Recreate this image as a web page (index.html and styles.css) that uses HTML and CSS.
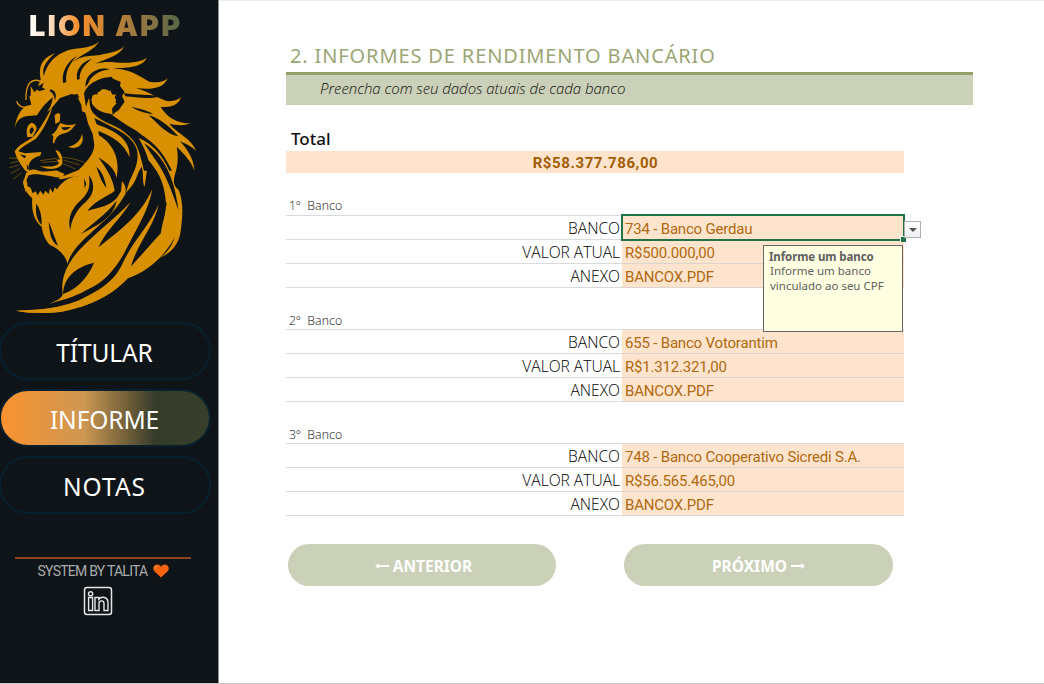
FILE: index.html
```html
<!DOCTYPE html>
<html lang="pt-BR">
<head>
<meta charset="utf-8">
<title>Lion App</title>
<link rel="stylesheet" href="styles.css">
</head>
<body>
<div class="app">
  <aside class="sidebar">
    <h1 class="brand">LION APP</h1>
    <svg class="lion" viewBox="0 114 657 831" aria-hidden="true">
      <!-- mane, neck and right strand -->
      <path class="o" d="M122 238C112 190 135 172 165 160C130 190 126 212 132 228C145 175 190 147 240 145C268 142 288 135 298 124C282 153 243 162 214 190C250 160 275 172 312 162C345 157 362 150 373 138C360 168 318 176 285 192C325 180 342 190 385 188C410 187 430 181 440 174C425 205 375 203 335 205C400 208 420 232 448 245C474 250 492 246 503 234C493 266 450 270 408 264C445 275 470 292 500 303C520 305 534 300 543 292C534 320 505 323 482 320C500 352 530 370 572 370C550 379 522 375 508 371C530 400 575 415 588 452C573 438 555 430 540 424C562 448 582 476 583 512C574 484 552 462 530 440C545 520 500 540 536 570C549 600 550 640 541 700C535 735 510 762 480 773C500 760 515 740 524 712C490 775 440 815 383 835C330 893 250 925 180 936C130 941 80 939 48 932C120 931 180 923 230 904C320 870 350 825 395 793C480 710 500 660 497 600C492 540 470 510 445 480L434 560C426 550 432 520 425 500C405 530 415 540 380 575C340 650 280 690 245 725C220 750 208 770 203 792C196 765 175 745 150 735C135 720 128 700 125 680C98 660 94 620 97 595C80 582 70 560 70 540C110 570 160 550 185 530L236 510C255 490 282 465 283 435L278 402L264 370L256 338L246 334L244 315L230 286L215 282L180 294L150 330L120 345L86 348C67 348 48 360 44 386C48 355 58 332 78 318L94 314L88 290L110 270Z"/>
      <!-- left ear and wisps -->
      <path class="l" d="M122 244C95 233 76 250 78 300M50 304C57 325 78 325 95 316"/>
      <path class="o" d="M92 258L105 280L125 288L112 315L93 306Z"/>
      <!-- cuts through the crown -->
      <path class="d" d="M190 250C182 210 210 180 230 168C205 195 196 220 199 246ZM232 240C225 215 242 185 276 176C247 199 238 217 239 237ZM257 260C253 220 300 197 330 208C294 211 270 232 265 250ZM120 256L132 248L126 262L136 268L118 274L104 264ZM152 268C167 272 171 286 165 301C162 285 157 276 148 273ZM372 280C410 285 450 284 488 289C445 299 410 292 376 289ZM395 320C415 326 440 329 460 343C432 338 405 330 395 320Z"/>
      <!-- right ear -->
      <path class="d" d="M252 281C265 242 310 232 336 230C336 238 351 239 362 246L360 258L374 276L366 288L374 305L363 320L356 331L347 336L338 345L336 326L349 300L333 277L323 270L311 267L300 272L292 283L278 286L274 300C280 325 304 337 333 342C354 359 384 378 410 393C440 418 477 430 516 512L508 512C486 464 460 433 416 414C435 448 447 475 451 512H432C422 470 415 430 386 407C350 372 305 370 280 340C268 323 270 310 267 293L258 320Z"/>
      <path class="o" d="M275 310L284 282L296 290L292 275L308 282L305 268L321 278L333 270L331 286L348 283L340 302L350 310L336 325L326 340C303 338 286 327 275 310Z"/>
      <path class="d" d="M283 354C340 384 397 402 411 450C418 485 403 514 389 542L376 583C379 560 374 554 366 543L363 574L350 595C318 624 302 620 262 633C286 599 324 590 344 572C338 530 315 500 296 473C325 490 344 505 350 534C361 480 342 434 297 406L295 393C345 414 370 430 389 472C391 419 350 395 290 373Z"/>
      <path class="d" d="M289 500C307 515 316 540 319 564C301 540 297 521 289 500ZM267 525C289 556 282 588 248 614C228 634 214 660 211 690C200 650 220 620 244 599C270 574 270 557 267 525ZM243 702C275 670 318 645 350 602C339 658 287 676 243 702ZM109 611C119 625 126 646 125 675C108 656 106 635 109 611ZM146 665C157 690 164 713 174 737C151 724 149 695 146 665ZM432 430C480 460 520 510 536 632C517 580 500 525 463 475ZM446 345C490 360 514 386 535 409C500 403 474 372 446 345Z"/>
      <!-- lower body -->
      <path class="d" d="M203 792C220 750 260 708 310 665L392 600L460 560L500 610L482 700L396 796L300 890H180Z"/>
      <path class="o" d="M188 882C181 835 201 790 240 748C295 690 345 657 392 606C360 660 322 685 295 742C360 690 424 645 457 566C447 630 407 690 380 745C350 806 310 849 260 870C225 891 185 900 147 912C170 902 187 894 188 882Z"/>
      <path class="d" d="M189 882C190 836 223 802 282 788C267 825 235 867 189 882Z"/>
      <path class="o" d="M476 613C464 675 414 729 394 795L383 835C330 893 260 920 180 936C130 941 80 939 48 932C120 931 190 922 236 902C307 867 344 842 368 790C400 720 447 680 476 613Z"/>
      <!-- face -->
      <path class="d" d="M98 373C113 338 130 315 158 292C157 320 140 337 126 353ZM222 285L232 281L239 295ZM252 535L259 552L254 565Z"/>
      <path class="o" d="M44 454C58 431 80 427 102 408C122 385 137 355 157 322C146 362 125 397 107 417C85 430 63 441 55 454L75 460L124 456L121 467C103 471 91 480 86 496L89 520L76 512C63 495 51 480 44 454Z"/>
      <path class="o" d="M82 412C77 390 82 374 94 368C104 370 110 378 110 388L98 410Z"/>
      <path class="d" d="M90 400C87 388 92 381 99 383L102 390L95 402Z"/>
      <path class="d" d="M60 463L79 468L73 475ZM80 491L88 506L82 510Z"/>
      <path class="o" d="M166 372L164 345L174 339L181 343L179 365ZM154 404C170 397 172 381 181 369C196 376 211 377 229 371C216 386 210 396 194 400C177 403 166 413 163 430L158 428L160 408ZM204 440C225 438 242 422 246 402C256 430 234 453 204 440Z"/>
      <path class="d" d="M184 382L212 381C204 389 190 397 184 382Z"/>
      <path class="o" d="M166 450C184 452 189 474 187 492C175 510 145 511 119 498C144 502 172 500 177 488L169 478L180 479ZM78 520C90 506 102 506 116 512C140 519 160 510 172 512L194 522L185 533C150 530 108 516 86 526L80 540L78 580L69 548Z"/>
      <path class="d" d="M82 534C102 519 128 531 160 536L185 538C207 531 223 530 239 528C209 529 193 542 178 558L171 568L164 562L159 578L150 565L146 582L136 572L130 584L121 572L113 586L107 574L98 580L92 564L82 558Z"/>
      <path class="l thin" d="M52 475L27 474M54 484L32 489M57 494L27 504M60 505L32 521M65 518L40 538M120 482L170 475M126 487L175 484M187 472C218 475 241 481 257 490M190 480L239 495M190 491L226 507"/>
    </svg>
    <nav class="nav">
      <a class="nav-item">TÍTULAR</a>
      <a class="nav-item active">INFORME</a>
      <a class="nav-item wide">NOTAS</a>
    </nav>
    <footer class="credit">
      <div class="credit-line"><span class="credit-text">SYSTEM BY TALITA</span>
        <svg class="heart" viewBox="0 0 16 14"><path fill="#f7630c" d="M8 13.5L1.3 7.2C-.3 5.4 0 2.5 1.8 1.2C3.8-.2 6.5.4 8 2.7C9.500.4 12.200-.2 14.200 1.200C16 2.500 16.300 5.400 14.700 7.200Z"/><path fill="none" stroke="#ff9a55" stroke-width="1" d="M2 5C1.700 3.500 2.600 2.300 4 2"/></svg>
      </div>
      <svg class="linkedin" viewBox="0 0 30 30" fill="none" stroke="#e4e6e7"><rect x="1.500" y="1.500" width="27" height="27" rx="2.500" stroke-width="1.500"/><g stroke-width="1.400"><circle cx="7.600" cy="7.800" r="2.100"/><path d="M5.600 11.500H9.600V24.500H5.600ZM12 11.500H15.800V13.200C18.500 10 25 10.500 25 17V24.500H21V17.500C21 14 16 14 16 17.500V24.500H12Z"/></g></svg>
    </footer>
  </aside>
  <main class="sheet">
    <h2 class="title">2. INFORMES DE RENDIMENTO BANCÁRIO</h2>
    <p class="hint"><span>Preencha com seu dados atuais de cada banco</span></p>
    <h3 class="total-label">Total</h3>
    <div class="total"><span>R$58.377.786,00</span></div>
    <section class="bank">
      <h4><span>1º&nbsp; Banco</span></h4>
      <div class="row"><label>BANCO</label><div class="value selected"><span>734 - Banco Gerdau</span>
        <i class="handle"></i><button class="drop" aria-label="Abrir lista"></button>
        <div class="tip"><b>Informe um banco</b><p>Informe um banco<br>vinculado ao seu CPF</p></div></div></div>
      <div class="row"><label>VALOR ATUAL</label><div class="value"><span>R$500.000,00</span></div></div>
      <div class="row"><label>ANEXO</label><div class="value"><span>BANCOX.PDF</span></div></div>
    </section>
    <section class="bank">
      <h4><span>2º&nbsp; Banco</span></h4>
      <div class="row"><label>BANCO</label><div class="value"><span>655 - Banco Votorantim</span></div></div>
      <div class="row"><label>VALOR ATUAL</label><div class="value"><span>R$1.312.321,00</span></div></div>
      <div class="row"><label>ANEXO</label><div class="value"><span>BANCOX.PDF</span></div></div>
    </section>
    <section class="bank">
      <h4><span>3º&nbsp; Banco</span></h4>
      <div class="row"><label>BANCO</label><div class="value"><span>748 - Banco Cooperativo Sicredi S.A.</span></div></div>
      <div class="row"><label>VALOR ATUAL</label><div class="value"><span>R$56.565.465,00</span></div></div>
      <div class="row"><label>ANEXO</label><div class="value"><span>BANCOX.PDF</span></div></div>
    </section>
    <div class="actions">
      <button class="pill"><svg class="arrow" viewBox="0 0 14 8"><path d="M0 4L4 1V3H14V5H4V7Z"/></svg>ANTERIOR</button>
      <button class="pill next">PRÓXIMO<svg class="arrow" viewBox="0 0 14 8"><path d="M14 4L10 1V3H0V5H10V7Z"/></svg></button>
    </div>
  </main>
</div>
</body>
</html>
```
FILE: styles.css
```css
* { box-sizing: border-box; margin: 0; padding: 0; }
body { background: #fff; font-family: "Open Sans", "Noto Sans", sans-serif; overflow: hidden; }
.app { display: flex; height: 684px; border-bottom: 1px solid #c9c9c9; }
.sidebar { width: 219px; flex: none; background: #0e1417; border-right: 1px solid #8b8d8e; display: flex; flex-direction: column; }
.brand {
  width: 156px; height: 30px; margin: 11px 0 0 29px; white-space: nowrap;
  font: 900 29px/30px Inter, sans-serif; letter-spacing: 2.1px;
  background: linear-gradient(90deg, #fff 0%, #fbdcc0 14%, #f98f2e 31%, #c98535 50%, #8d7442 75%, #4f6548 100%);
  -webkit-background-clip: text; background-clip: text; color: transparent;
}
.lion { width: 219px; height: 277px; margin-top: -3px; display: block; }
.o { fill: #d89000; }
.d { fill: #0e1417; }
.l { fill: none; stroke: #d89000; stroke-width: 4; }
.thin { stroke-width: 2; opacity: .65; }
.nav { display: flex; flex-direction: column; gap: 9px; margin: 7px 0 0 -1px; width: 212px; }
.nav-item {
  height: 58px; border: 2px solid #08202e; border-radius: 29px; color: #fff;
  font: 400 24.5px/58px "Noto Sans", sans-serif; letter-spacing: -.1px; text-align: center; padding-right: 1px;
}
.wide { letter-spacing: 1px; }
.active { background: linear-gradient(90deg, #f9922f 0%, #cd9753 40%, #353c2b 74%, #373e2b 100%); }
.credit { width: 176px; margin: 43px 0 0 15px; border-top: 2px solid #8a431c; display: flex; flex-direction: column; align-items: center; }
.credit-line { display: flex; align-items: center; gap: 6px; height: 23px; padding-left: 1px; color: #a9abac; font: 400 14px/22px Roboto, sans-serif; }
.credit-text { letter-spacing: -.75px; white-space: nowrap; }
.heart { width: 16px; height: 14px; }
.linkedin { width: 30px; height: 30px; margin: 4px 10px 0 0; }

.sheet { padding: 38px 0 0 67px; width: 825px; border-top: 1px solid #eee; }
.title { height: 33px; padding-left: 4px; font: 400 20px/34px "Noto Sans", sans-serif; letter-spacing: .87px; color: #9ba674; white-space: nowrap; }
.hint { width: 687px; height: 33px; background: #cbd0b8; border-top: 3px solid #929f67; padding-left: 34px; font: italic 300 15px/27px "Open Sans", sans-serif; letter-spacing: -.04px; color: #101010; }
.total-label { height: 46px; padding: 22px 0 0 5px; font: 500 17px/24px "Noto Sans", sans-serif; color: #111; }
.total { width: 618px; height: 22px; background: #fee4cd; color: #a45c04; text-align: center; font: 700 15px/24px Roboto, sans-serif; letter-spacing: .6px; padding-left: 1px; }
.bank { width: 618px; }
.bank h4 { height: 43px; padding: 22px 0 0 3px; border-bottom: 1px solid #d8dadc; font: 300 12.3px/22px "Open Sans", sans-serif; letter-spacing: .1px; color: #111; }
.bank + .bank h4 { height: 42px; }
.row { display: grid; grid-template-columns: 336px 282px; grid-template-rows: 24px; height: 24px; }
.row label { height: 24px; border-bottom: 1px solid #d8dadc; text-align: right; padding-right: 2px; font: 300 15.6px/25px "Open Sans", sans-serif; color: #000; }
.value { position: relative; height: 24px; background: #fee4cd; border-bottom: 1px solid #dbd4cf; padding-left: 3px; color: #b0690f; font: 400 15px/26px Roboto, sans-serif; letter-spacing: -.19px; white-space: nowrap; }
.selected { z-index: 1; }
.selected::before { content: ""; position: absolute; inset: -2px -1px -2px -1px; border: 2px solid #217346; }
.handle { position: absolute; right: -2px; bottom: -3px; width: 6px; height: 6px; background: #217346; border: 1px solid #fff; border-right: 0; border-bottom: 0; }
.drop { position: absolute; left: 282px; top: 5px; width: 17px; height: 17px; border: 1px solid #adb0b5; background: linear-gradient(#fff, #eceef2); }
.drop::after { content: ""; position: absolute; left: 4px; top: 6px; border: 4px solid transparent; border-top-color: #555; border-bottom: 0; }
.tip { position: absolute; z-index: 2; left: 141px; top: 29px; width: 140px; height: 87px; border: 1px solid #666; background: #ffffe1; color: #606060; padding: 3px 5px; font: 400 11.5px/15px "Noto Sans", sans-serif; letter-spacing: 0; }
.tip b { display: block; height: 14px; letter-spacing: -.1px; }
.tip p { padding-left: 1px; }
.actions { display: flex; gap: 68px; padding: 28px 0 0 2px; }
.pill { width: 268px; height: 42px; border: 0; border-radius: 21px; background: #cbd0b8; color: #fff; display: flex; align-items: center; justify-content: center; gap: 4px; padding: 1px 0 0 3px; font: 700 15.5px/42px "Noto Sans", sans-serif; }
.next { width: 269px; padding-left: 0; }
.arrow { width: 14px; height: 8px; fill: #fff; }
```
